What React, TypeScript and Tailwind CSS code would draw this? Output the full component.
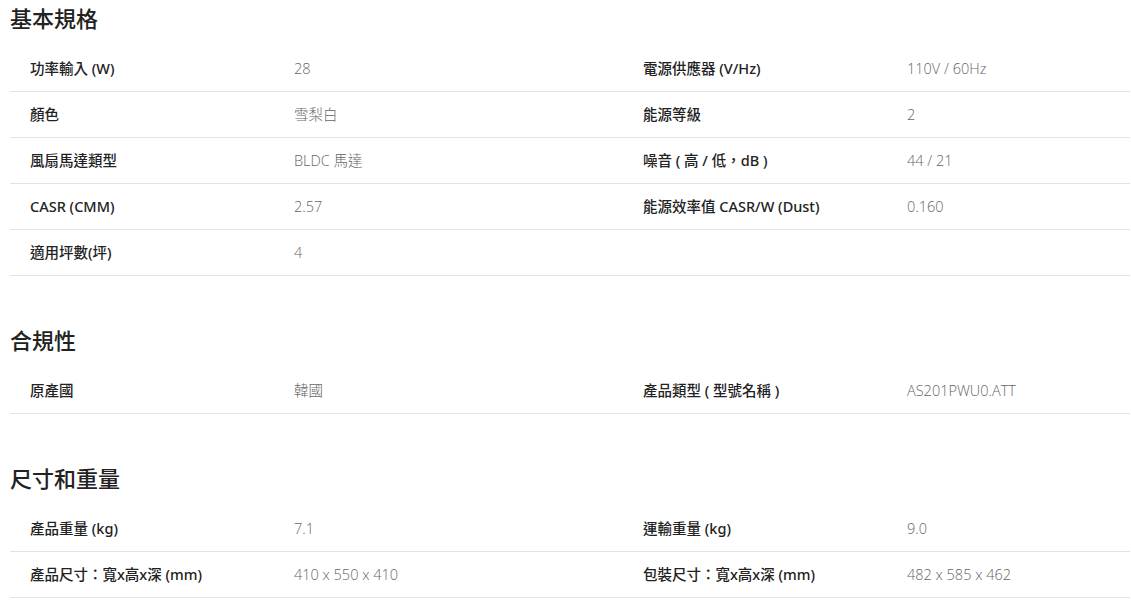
import React from "react";

type Row = [string, string, string?, string?];

const sections: { title: string; rows: Row[] }[] = [
  {
    title: "基本規格",
    rows: [
      ["功率輸入 (W)", "28", "電源供應器 (V/Hz)", "110V / 60Hz"],
      ["顏色", "雪梨白", "能源等級", "2"],
      ["風扇馬達類型", "BLDC 馬達", "噪音 ( 高 / 低，dB )", "44 / 21"],
      ["CASR (CMM)", "2.57", "能源效率值 CASR/W (Dust)", "0.160"],
      ["適用坪數(坪)", "4"],
    ],
  },
  {
    title: "合規性",
    rows: [["原產國", "韓國", "產品類型 ( 型號名稱 )", "AS201PWU0.ATT"]],
  },
  {
    title: "尺寸和重量",
    rows: [
      ["產品重量 (kg)", "7.1", "運輸重量 (kg)", "9.0"],
      ["產品尺寸：寬x高x深 (mm)", "410 x 550 x 410", "包裝尺寸：寬x高x深 (mm)", "482 x 585 x 462"],
    ],
  },
];

const labelFont = { fontFamily: '"Noto Sans", "Noto Sans CJK TC", sans-serif' };

export default function App() {
  return (
    <div
      className="w-[1131px] h-[600px] overflow-hidden bg-white pl-[10px] pr-[1px]"
      style={{ fontFamily: '"Open Sans", "Noto Sans CJK TC", sans-serif' }}
    >
      {sections.map((s) => (
        <section key={s.title} className="mb-[46px] last:mb-0">
          <h2 className="h-[36px] leading-[36px] text-[22px] font-medium text-[#222] mb-[10px]">
            {s.title}
          </h2>
          {s.rows.map((r, i) => (
            <div
              key={i}
              className="grid grid-cols-[264px_349px_264px_1fr] h-[46px] items-center border-b border-[#e2e2e2] text-[14.5px]"
            >
              <div className="pl-5 font-medium text-[#222]" style={labelFont}>{r[0]}</div>
              <div className="pl-5 text-[#666] font-light">{r[1]}</div>
              <div className="pl-5 font-medium text-[#222]" style={labelFont}>{r[2] ?? ""}</div>
              <div className="pl-5 text-[#666] font-light">{r[3] ?? ""}</div>
            </div>
          ))}
        </section>
      ))}
    </div>
  );
}
